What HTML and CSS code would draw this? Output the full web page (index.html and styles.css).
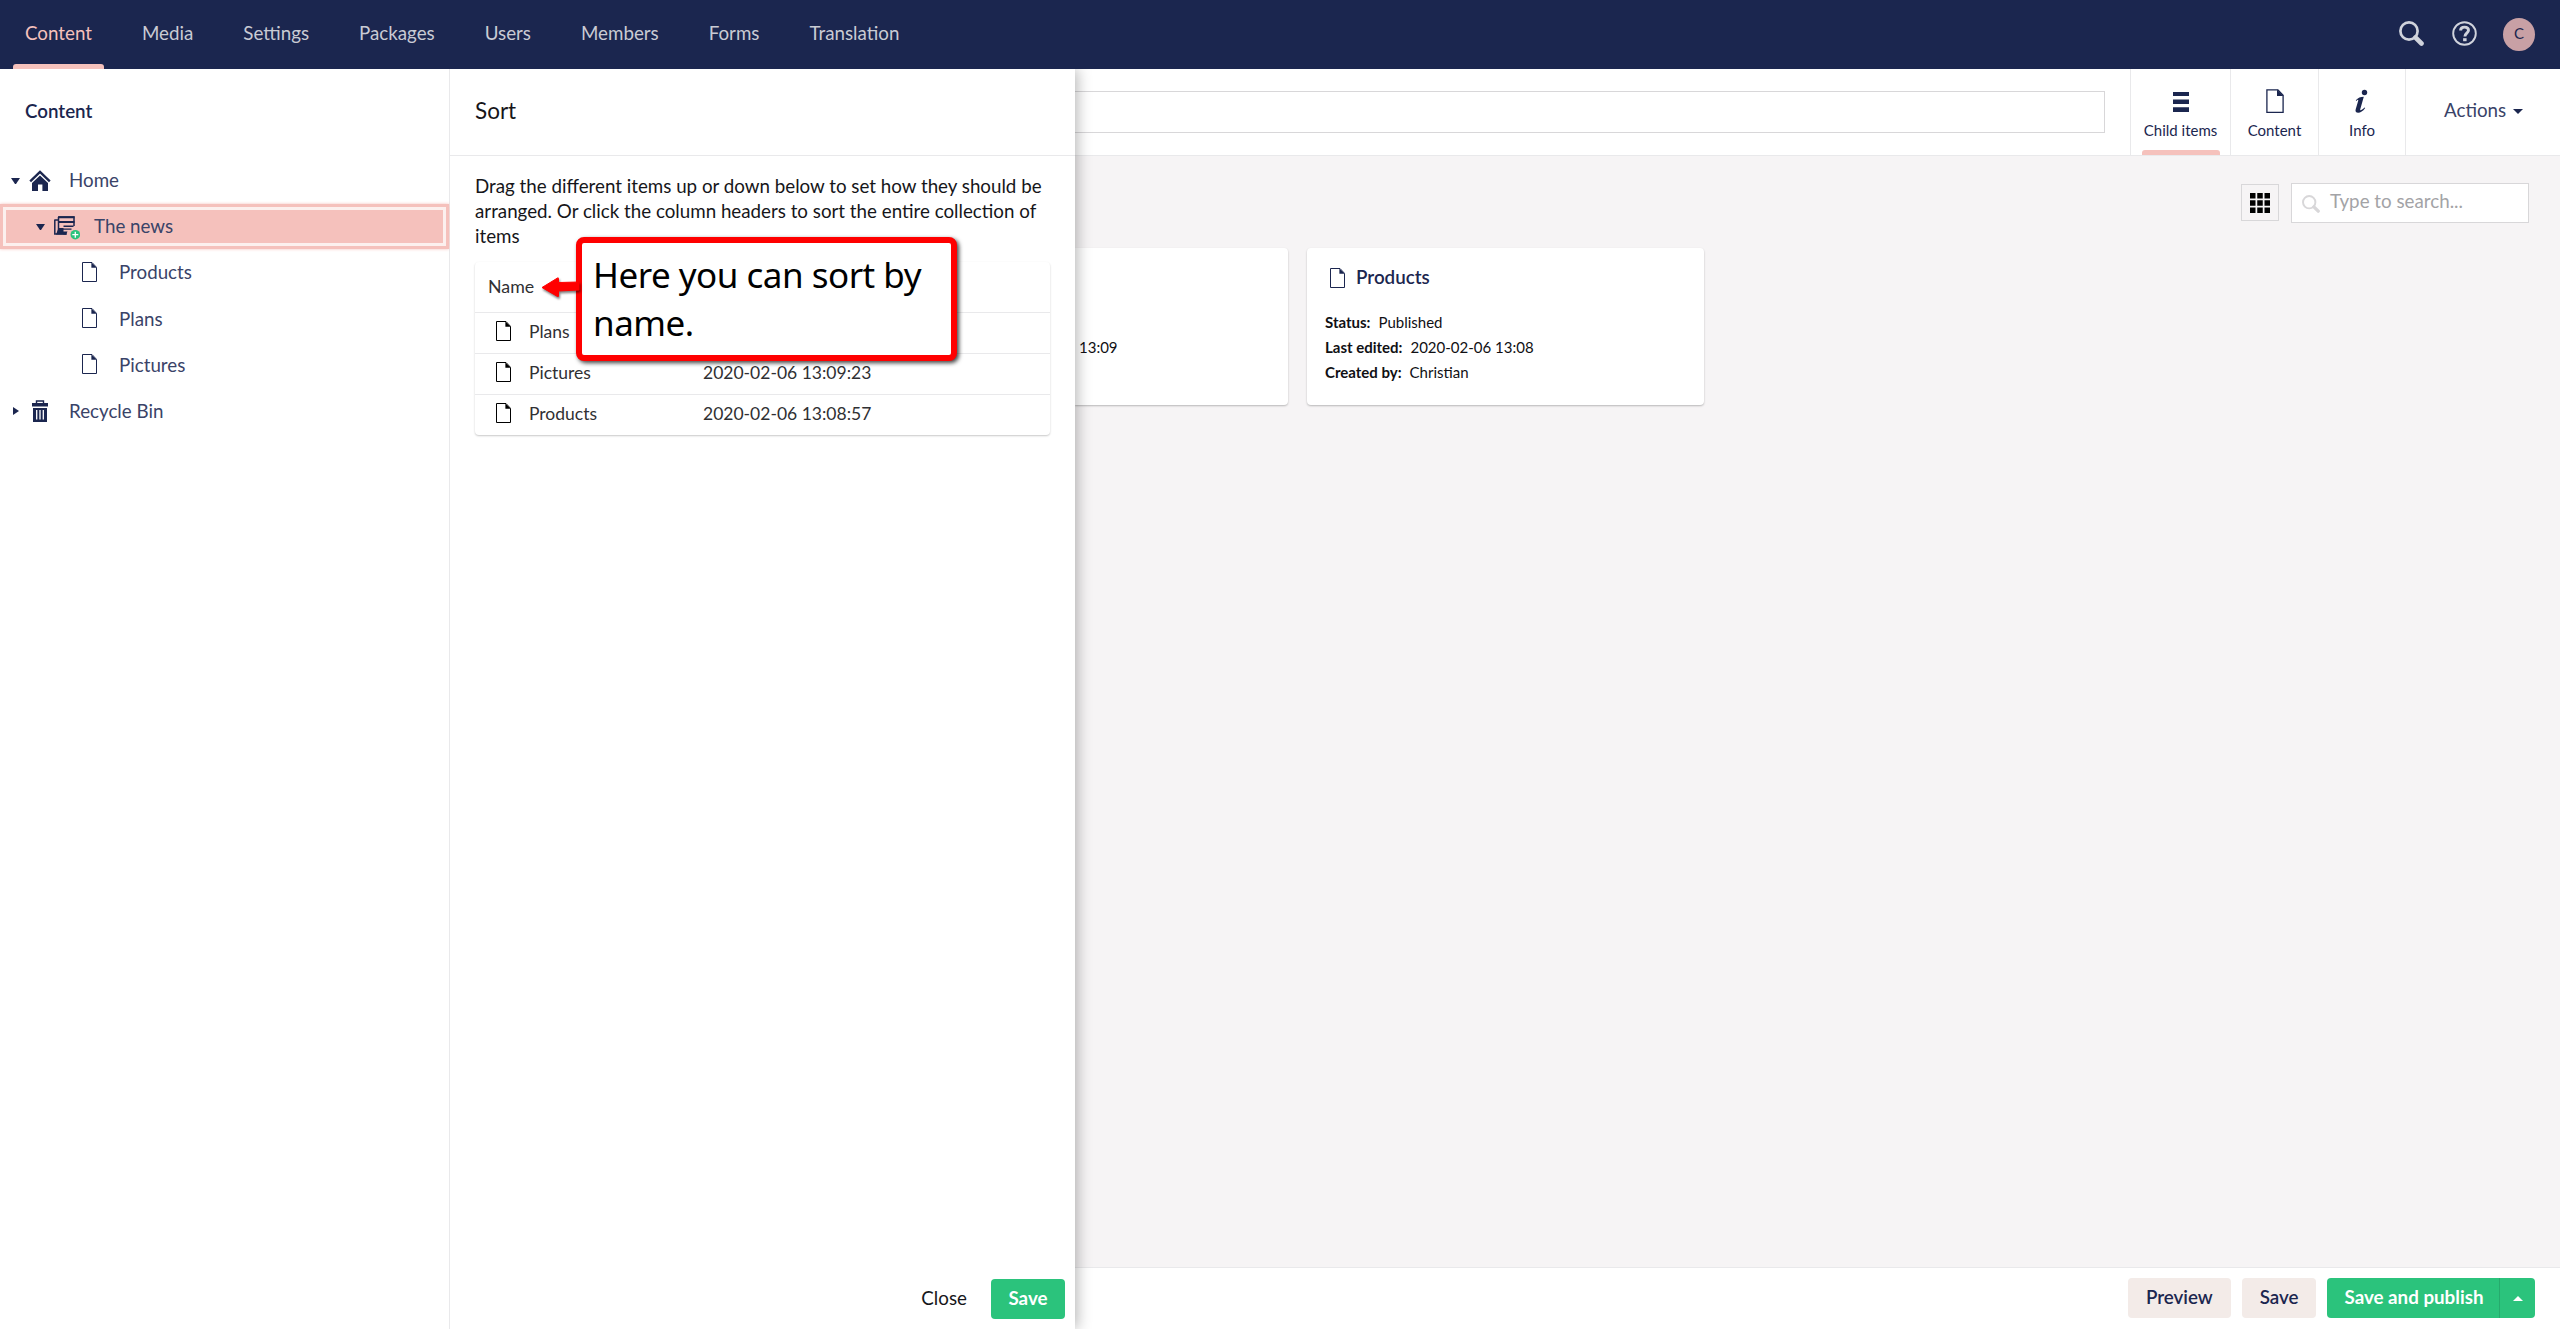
FILE: index.html
```html
<!DOCTYPE html>
<html lang="en">
<head>
<meta charset="utf-8">
<title>Content</title>
<link rel="stylesheet" href="styles.css">
</head>
<body>
<svg class="defs" width="0" height="0">
  <symbol id="doc" viewBox="0 0 15 20"><path d="M.5.5h9.500l4.500 4.800v14.200H.5z" fill="none" stroke="currentColor" stroke-width="1"/><path d="M9.400.4l5.200 5.400H9.400z" fill="currentColor"/></symbol>
  <symbol id="search" viewBox="0 0 25 25"><circle cx="10" cy="10" r="8.600" fill="none" stroke="currentColor" stroke-width="2.700"/><path d="M16.500 16.500l6 6" stroke="currentColor" stroke-width="4.600" stroke-linecap="round"/></symbol>
</svg>
<header class="topbar">
  <nav class="nav">
    <a class="nav-item active">Content</a><a class="nav-item">Media</a><a class="nav-item">Settings</a><a class="nav-item">Packages</a><a class="nav-item">Users</a><a class="nav-item">Members</a><a class="nav-item">Forms</a><a class="nav-item">Translation</a>
  </nav>
  <div class="tools">
    <svg class="tool" viewBox="0 0 25 25"><use href="#search"/></svg>
    <svg class="tool help" viewBox="0 0 25 25"><circle cx="12.500" cy="12.500" r="11.300" fill="none" stroke="currentColor" stroke-width="1.900"/><path d="M8.600 9.600c0-2.300 1.600-3.500 3.900-3.500s4 1.200 4 3.200c0 2.900-3.600 2.900-3.600 6.200" fill="none" stroke="currentColor" stroke-width="2.900"/><path d="M11.100 17.200h3.500v3h-3.500z" fill="currentColor"/></svg>
    <span class="avatar">C</span>
  </div>
</header>
<div class="body">
  <aside class="sidebar">
    <h2 class="side-title">Content</h2>
    <ul class="tree">
      <li class="row"><i class="caret-down"></i><svg class="ico" viewBox="0 0 22 22"><path d="M1.200 11.400L11 2l9.800 9.400" fill="none" stroke="currentColor" stroke-width="2.400"/><path d="M11 5.600l8 7.500V21h-5.600v-6.500H9V21H3v-7.900z" fill="currentColor"/></svg><span>Home</span></li>
      <li class="row level2 selected"><i class="caret-down"></i><svg class="ico news" viewBox="0 0 26 24"><path d="M4.500 1h15.500v9M4.500 1v17.200M.8 4h3.700M.8 3.500v14.500h12" fill="none" stroke="currentColor" stroke-width="1.500"/><path d="M4 .3h16.500v2H4zM4 5h16.500v2H4zM4.500 12h5v6.500H2zM9.500 9.500h10V11h-10zM9.500 12.500h8v1.300h-8zM9.500 15.500h4l-1.500 3.300H9.500z" fill="currentColor"/><circle cx="21.300" cy="18.700" r="4.800" fill="#2bc37c"/><path d="M18.300 18.700h6M21.300 15.700v6" stroke="#fff" stroke-width="1.300"/></svg><span>The news</span></li>
      <li class="row level3"><svg class="doc"><use href="#doc"/></svg><span>Products</span></li>
      <li class="row level3"><svg class="doc"><use href="#doc"/></svg><span>Plans</span></li>
      <li class="row level3"><svg class="doc"><use href="#doc"/></svg><span>Pictures</span></li>
      <li class="row"><i class="caret-right"></i><svg class="ico" viewBox="0 0 22 22"><path d="M7.500 3V1h7v2" fill="none" stroke="currentColor" stroke-width="1.400"/><path d="M3 3h16v3.500H3zM4 8h14v14H4z" fill="currentColor"/><path d="M7.700 10v9.500M11 10v9.500M14.300 10v9.500" stroke="#fff" stroke-width="1.300"/></svg><span>Recycle Bin</span></li>
    </ul>
  </aside>
  <section class="panel">
    <h2 class="panel-title">Sort</h2>
    <div class="panel-body">
      <p class="hint">Drag the different items up or down below to set how they should be arranged. Or click the column headers to sort the entire collection of items</p>
      <div class="table">
        <div class="tr th"><span>Name</span></div>
        <div class="tr"><svg class="doc"><use href="#doc"/></svg><span class="name">Plans</span></div>
        <div class="tr"><svg class="doc"><use href="#doc"/></svg><span class="name">Pictures</span><span>2020-02-06 13:09:23</span></div>
        <div class="tr"><svg class="doc"><use href="#doc"/></svg><span class="name">Products</span><span>2020-02-06 13:08:57</span></div>
        <div class="callout">Here you can sort by name.<svg class="arrow" viewBox="0 0 40 28"><path d="M1 13.500L16.500 4q1-.5 1 .5v4L38 8v8l-20.500 1v5q0 1-1 .5z" fill="#f00" stroke="#f00" stroke-linejoin="round"/></svg></div>
      </div>
    </div>
    <footer class="panel-foot"><a class="close">Close</a><a class="btn green">Save</a></footer>
  </section>
  <main class="main">
    <div class="editor-head">
      <div class="title-box"><div class="title-input"></div></div>
      <a class="tab child active"><svg class="tab-ico" viewBox="0 0 20 26"><path d="M2 5h16v4H2zM2 12.500h16v4.500H2zM2 20.300h16v4.700H2z" fill="currentColor"/></svg>Child items</a>
      <a class="tab page"><svg class="tab-ico" viewBox="0 0 20 26"><path d="M1.900 2.900h11l5.200 5.400v17H1.900z" fill="none" stroke="currentColor" stroke-width="1.300"/><path d="M12 2.500l6.500 6.500H12z" fill="currentColor"/></svg>Content</a>
      <a class="tab info"><svg class="tab-ico" viewBox="0 0 20 26"><g transform="translate(-.5 .8)"><circle cx="13" cy="4.700" r="2.700" fill="currentColor"/><path d="M4.300 12.500C6.500 10 9 9 12.300 9L8.700 21.600c-.4 1.600 1.400 1.100 4.300-1.900l.7.600C11.300 23.600 9 25 6.700 25 4.300 25 3.600 23.500 4.200 21.500L6.700 13c.3-1.400-.6-1.200-1.800.1z" fill="currentColor"/></g></svg>Info</a>
      <a class="actions">Actions<i class="caret-down"></i></a>
    </div>
    <div class="content">
      <div class="filters">
        <span class="grid-btn"><svg width="20" height="20" viewBox="0 0 20 20"><path d="M0 0h5.500v5.500H0zM7.250 0h5.500v5.500h-5.500zM14.500 0H20v5.500h-5.500zM0 7.250h5.500v5.500H0zM7.250 7.250h5.500v5.500h-5.500zM14.500 7.250H20v5.500h-5.500zM0 14.500h5.500V20H0zM7.250 14.500h5.500V20h-5.500zM14.500 14.500H20V20h-5.500z"/></svg></span>
        <span class="search"><svg class="search-ico" viewBox="0 0 25 25"><use href="#search"/></svg>Type to search...</span>
      </div>
      <div class="cards">
        <article class="card clipped"><p>13:09</p></article>
        <article class="card"><h3><svg class="doc"><use href="#doc"/></svg>Products</h3><p><b>Status:</b>Published</p><p><b>Last edited:</b>2020-02-06 13:08</p><p><b>Created by:</b>Christian</p></article>
      </div>
    </div>
    <footer class="foot"><a class="btn preview">Preview</a><a class="btn">Save</a><div class="split"><a class="btn green">Save and publish</a><a class="btn green drop"><i class="caret-up"></i></a></div></footer>
  </main>
</div>
</body>
</html>
```
FILE: styles.css
```css
* { box-sizing: border-box; }
body {
  margin: 0;
  width: 2560px;
  height: 1329px;
  overflow: hidden;
  display: flex;
  flex-direction: column;
  font: 18.75px/25px Lato, sans-serif;
  color: #1b264f;
  background: #fff;
}
h2, h3, p, ul { margin: 0; padding: 0; font-weight: 400; }
.defs { position: absolute; }
svg { display: block; flex: none; }

.topbar { height: 69px; flex: none; background: #1b264f; display: flex; justify-content: space-between; }
.nav { display: flex; }
.nav-item { padding: 20px 25px 0; color: #c9cbd4; position: relative; }
.nav-item.active { color: #f5c1bc; }
.nav-item.active::after {
  content: "";
  position: absolute;
  left: 13px;
  right: 13px;
  bottom: 0;
  height: 5px;
  border-radius: 3px 3px 0 0;
  background: #f5c1bc;
}
.tools { display: flex; align-items: center; padding-right: 25px; color: #d0d3dc; }
.tool { width: 25px; height: 25px; margin: 0 28px 2px 0; }
.tool.help { margin-right: 26px; }
.avatar { width: 32px; height: 33px; border-radius: 50%; background: #c8a0a5; color: #1b264f; font-size: 15px; line-height: 31px; text-align: center; }

.body { flex: 1; display: flex; min-height: 0; }
.sidebar { width: 450px; flex: none; border-right: 1px solid #e9e9eb; }
.side-title { height: 89px; padding: 29px 25px 0; font-size: 18.75px; line-height: 25px; font-weight: 600; }
.tree { list-style: none; }
.row { height: 45px; margin-bottom: 1.200px; padding-left: 11px; display: flex; align-items: center; color: #3a4368; }
.row span { margin-top: -2px; }
.row svg { color: #1b264f; }
.level2 { padding-left: 36px; }
.level3 { padding-left: 82px; }
.level3 .doc { margin: -2px 22px 0 0; }
.selected { background: #f5c1bc; box-shadow: inset 0 0 0 3px #f5c1bc, inset 0 0 0 6px #fcf0ee, 0 0 3px #f5c1bc; }
.ico { width: 22px; height: 22px; margin: 0 18px 0 9px; }
.ico.news { width: 26px; height: 24px; margin: 3px 14px 0 9px; }
.doc { width: 15px; height: 20px; }
.caret-down, .caret-up { display: block; border: 4.500px solid transparent; width: 9px; height: 0; flex: none; }
.caret-down { border-top: 6px solid #1b264f; border-bottom: 0; }
.caret-up { border-width: 0 5px 5px; width: 10px; border-bottom-color: #fff; }
.caret-right { width: 6px; margin: 0 1px 0 2px; border: 4.500px solid transparent; border-left: 6px solid #1b264f; border-right: 0; }

.panel {
  width: 625px;
  flex: none;
  display: flex;
  flex-direction: column;
  background: #fff;
  color: #16161a;
  box-shadow: 2px 0 14px rgba(0, 0, 0, .3);
  clip-path: inset(0 -30px 0 0);
  z-index: 1;
}
.panel-title { height: 87px; padding: 29px 25px 0; font-size: 22.500px; line-height: 26px; border-bottom: 1px solid #e9e9eb; }
.panel-body { flex: 1; padding: 17px 25px 0; }
.table { position: relative; height: 173px; margin-top: 14px; border-radius: 4px; box-shadow: 0 1px 2px rgba(0, 0, 0, .22); color: #303033; font-size: 17.500px; }
.tr { height: 41px; display: flex; align-items: center; padding: 0 0 4px 21px; border-top: 1px solid #e9e9eb; }
.tr .doc { color: #000; }
.tr.th { height: 50px; padding: 0 0 2px 13px; border: 0; font-size: 17.800px; }
.name { width: 192px; padding-left: 18px; }
.callout {
  position: absolute;
  left: 101px;
  top: -25px;
  width: 381px;
  height: 124px;
  padding: 8px 0 0 11px;
  border: 6px solid #f00;
  border-radius: 8px;
  background: #fff;
  color: #000;
  font: 35px/48px "Noto Sans", sans-serif;
  letter-spacing: -.5px;
  box-shadow: 2px 2px 4px rgba(0, 0, 0, .75);
}
.arrow { position: absolute; left: -41px; top: 31px; width: 40px; height: 28px; filter: drop-shadow(1px 2px 1px rgba(0, 0, 0, .5)); }
.panel-foot { height: 50px; padding-right: 10px; display: flex; justify-content: flex-end; align-items: flex-start; }
.close { padding: 6px 24px 0 0; }

.btn { height: 40px; padding: 6px 17.500px 0; border-radius: 4px; background: #f3ebe8; font-weight: 600; }
.green { background: #2bc37c; color: #fff; font-weight: 700; }

.main { flex: 1; min-width: 0; display: flex; flex-direction: column; overflow: hidden; }
.editor-head { height: 87px; flex: none; display: flex; border-bottom: 1px solid #e9e9eb; background: #fff; }
.title-box { flex: 1; padding: 22px 25px 0 0; }
.title-input { height: 42px; border: 1px solid #d8d7d9; border-left: 0; }
.tab { position: relative; border-left: 1px solid #e9e9eb; padding-top: 18px; display: flex; flex-direction: column; align-items: center; font-size: 15px; line-height: 20px; }
.tab-ico { width: 20px; height: 26px; margin-bottom: 7px; }
.child { width: 100px; }
.page { width: 88px; }
.info { width: 87px; }
.tab.active::after { content: ""; position: absolute; left: 11px; right: 10px; bottom: 0; height: 5px; background: #f5c1bc; border-radius: 3px 3px 0 0; }
.actions { width: 155px; border-left: 1px solid #e9e9eb; padding: 28px 0 0 38px; display: flex; color: #3a4368; }
.actions .caret-down { margin: 12px 0 0 7px; border-width: 5px 5px 0; width: 10px; }
.content { flex: 1; background: #f6f4f5; padding-top: 27px; }
.filters { height: 65px; margin-right: 31px; display: flex; justify-content: flex-end; gap: 12px; }
.grid-btn { width: 38px; height: 37px; margin-top: 1px; border: 1px solid #d8d7d9; display: flex; align-items: center; justify-content: center; }
.search { width: 238px; height: 40px; border: 1px solid #d8d7d9; background: #fff; display: flex; padding: 4px 0 0 10px; color: #a3a3a6; }
.search-ico { width: 18px; height: 18px; margin: 7px 10px 0 0; color: #d8d7d9; }
.cards { display: flex; gap: 19px; }
.card { width: 397px; height: 157px; padding: 17px 18px; border-radius: 4px; background: #fff; color: #101014; box-shadow: 0 1px 2px rgba(0, 0, 0, .25); }
.card.clipped { width: 213px; padding: 87px 0 0 4px; border-radius: 0 4px 4px 0; }
.card h3 { height: 45px; display: flex; gap: 11px; padding-left: 5px; color: #1b264f; font-size: 18.75px; line-height: 24px; font-weight: 600; }
.card .doc { margin-top: 3px; }
.card p { font-size: 15px; }
.card b { margin-right: 8px; }
.foot { height: 62px; flex: none; border-top: 1px solid #e9e9eb; padding: 10px 25px 0; display: flex; justify-content: flex-end; gap: 11px; background: #fff; }
.preview { padding-right: 18.500px; }
.split { display: flex; }
.split .btn:first-child { padding-right: 15.500px; border-radius: 4px 0 0 4px; }
.split .drop { width: 36px; padding: 18px 0 0 13px; border-left: 1px solid #26ab6d; border-radius: 0 4px 4px 0; }
```
